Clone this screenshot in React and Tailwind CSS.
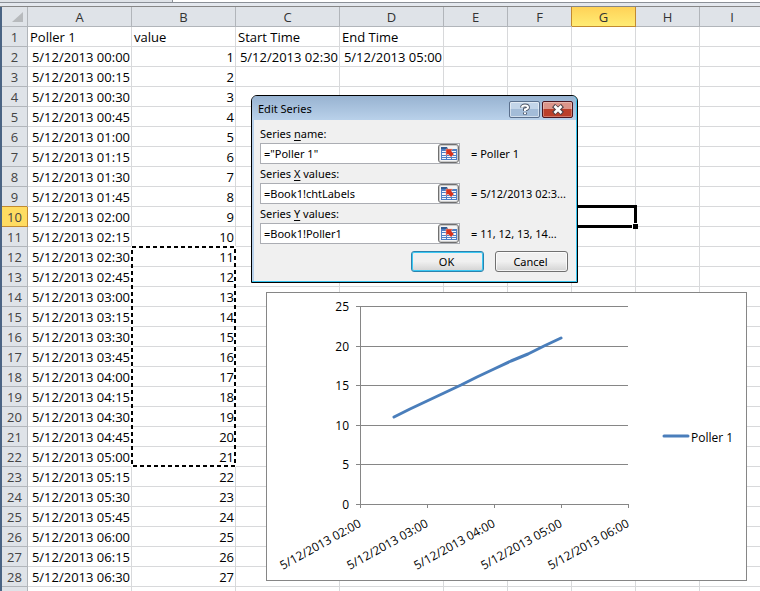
const columns = ["A", "B", "C", "D", "E", "F", "G", "H", "I"];
const activeCell = { column: "G", row: 10 };

const pad = (n) => String(n).padStart(2, "0");

// One poll every 15 minutes, starting at midnight
const polls = Array.from({ length: 27 }, (_, i) => ({
  time: `5/12/2013 ${pad(Math.floor(i / 4))}:${pad((i % 4) * 15)}`,
  value: i + 1,
}));

const rows = [
  { A: "Poller 1", B: "value", C: "Start Time", D: "End Time" },
  ...polls.map((p) => ({ A: p.time, B: p.value })),
];
rows[1].C = "5/12/2013 02:30";
rows[1].D = "5/12/2013 05:00";

function ActiveOutline() {
  return (
    <span className="absolute -top-0.5 -right-0.5 -bottom-0.5 -left-0.5 z-10 border-[3px] border-black">
      <span className="absolute -right-1 -bottom-1 size-[6px] border-t border-l border-white bg-black" />
    </span>
  );
}

function MarchingAnts() {
  return (
    <svg
      className="absolute -top-0.5 -left-0.5 z-10 h-[223px] w-[107px]"
      viewBox="0 0 107 223"
      fill="none"
    >
      <rect x="2" y="2" width="103" height="219" stroke="#fff" strokeWidth="2" />
      <rect x="2" y="2" width="103" height="219" stroke="#000" strokeWidth="2" strokeDasharray="4 3" />
    </svg>
  );
}

function Sheet() {
  return (
    <table className="w-full table-fixed border-separate border-spacing-0 text-[13px] leading-[17px] text-black">
      <colgroup>
        <col className="w-[26px]" />
        <col className="w-[104px]" />
        <col className="w-[104px]" />
        <col className="w-[104px]" />
        <col className="w-[104px]" />
        <col className="w-[64px]" />
        <col className="w-[64px]" />
        <col className="w-[64px]" />
        <col className="w-[64px]" />
        <col />
      </colgroup>
      <thead>
        <tr className="h-5">
          <th className="border-r border-b border-[#b1b5ba] bg-[#dfe3e8] p-0">
            <svg className="ml-2.5 size-3" viewBox="0 0 12 12">
              <path d="M11 1v10H0z" fill="#b7babd" />
            </svg>
          </th>
          {columns.map((c) => (
            <th
              key={c}
              scope="col"
              className={
                c === activeCell.column
                  ? "relative border-r border-b border-[#c28a30] bg-linear-to-b from-[#ffd257] to-[#ffec74] px-0 pt-0.5 pb-0 font-normal text-[#333] before:absolute before:inset-y-0 before:-left-px before:w-px before:bg-[#c28a30]"
                  : "border-r border-b border-[#b1b5ba] bg-[#dfe3e8] px-0 pt-0.5 pb-0 font-normal text-[#333] last:border-r-0 last:pl-1"
              }
            >
              {c}
            </th>
          ))}
        </tr>
      </thead>
      <tbody>
        {rows.map((row, i) => (
          <tr key={i} className="h-5">
            <th
              scope="row"
              className={
                i + 1 === activeCell.row
                  ? "relative border-r border-b border-[#c28a30] bg-[#ffdc61] px-0 pt-0.5 pb-0 font-normal text-[#444] before:absolute before:inset-x-0 before:-top-px before:h-px before:bg-[#c28a30]"
                  : "border-r border-b border-[#b1b5ba] bg-[#dfe3e8] px-0 pt-0.5 pb-0 font-normal text-[#444]"
              }
            >
              {i + 1}
            </th>
            {columns.map((c) => (
              <td
                key={c}
                className={
                  i === 0
                    ? "border-r border-b border-[#d8d9db] px-0.5 pt-0.5 pb-0 whitespace-nowrap last:border-r-0"
                    : "relative border-r border-b border-[#d8d9db] pt-0.5 pr-px pb-0 pl-0 text-right whitespace-nowrap last:border-r-0"
                }
              >
                {row[c]}
                {c === activeCell.column && i + 1 === activeCell.row && <ActiveOutline />}
                {c === "B" && i + 1 === 12 && <MarchingAnts />}
              </td>
            ))}
          </tr>
        ))}
        {/* Sliver of the next, still empty row */}
        <tr className="h-5">
          <th className="border-r border-[#b1b5ba] bg-[#dfe3e8] p-0" />
          {columns.map((c) => (
            <td key={c} className="border-r border-[#d8d9db] p-0 last:border-r-0" />
          ))}
        </tr>
      </tbody>
    </table>
  );
}

const plot = { left: 93, right: 361, top: 13, bottom: 211 };
const xTicks = ["02:00", "03:00", "04:00", "05:00", "06:00"];
const yTicks = [0, 5, 10, 15, 20, 25];
const yAt = (v) => Math.round(plot.bottom - (v * (plot.bottom - plot.top)) / 25);
const xAt = (quarters) => Math.round(plot.left + (quarters * (plot.right - plot.left)) / 16);

function Chart() {
  const points = polls
    .slice(10, 21)
    .map((p, i) => `${xAt(i + 2)},${yAt(p.value)}`)
    .join(" ");

  return (
    <div className="absolute top-[292px] left-[266px] z-20 border border-[#868686] bg-white">
      <svg className="block h-[287px] w-[479px]" viewBox="0 0 479 287" fontSize="12">
        <g stroke="#868686" shapeRendering="crispEdges">
          {yTicks.map((v) => (
            <line key={v} x1={plot.left - 4} x2={plot.right} y1={yAt(v)} y2={yAt(v)} />
          ))}
          <line x1={plot.left} x2={plot.left} y1={plot.top} y2={plot.bottom} />
          {xTicks.map((t, i) => (
            <line key={t} x1={xAt(i * 4)} x2={xAt(i * 4)} y1={plot.bottom} y2={plot.bottom + 4} />
          ))}
        </g>
        <polyline
          points={points}
          fill="none"
          stroke="#4a7ebb"
          strokeWidth="3"
          strokeLinecap="round"
          strokeLinejoin="round"
        />
        {yTicks.map((v) => (
          <text key={v} x="82" y={yAt(v) + 5} textAnchor="end">
            {v}
          </text>
        ))}
        {xTicks.map((t, i) => (
          <text
            key={t}
            textAnchor="end"
            transform={`translate(${xAt(i * 4) + 2} 233) rotate(-29)`}
          >
            5/12/2013 {t}
          </text>
        ))}
        <line x1="397" x2="421" y1="143" y2="143" stroke="#4a7ebb" strokeWidth="3" strokeLinecap="round" />
        <text x="424" y="149">
          Poller 1
        </text>
      </svg>
    </div>
  );
}

function RangeIcon() {
  return (
    <svg className="h-[15px] w-4 shrink-0" viewBox="0 0 16 15">
      <path d="M0 3h16v11H0z" fill="#4d7fc4" />
      <path d="M0 1h6l1 2H0z" fill="#33598f" />
      <path
        d="M1 5h4v1H1zM6 5h4v1H6zM11 5h4v1h-4zM1 7h4v2H1zM6 7h4v2H6zM11 7h4v2h-4zM1 10h4v1H1zM6 10h4v1H6zM11 10h4v1h-4zM1 12h4v1H1zM6 12h4v1H6zM11 12h4v1h-4z"
        fill="#f4f8fd"
      />
      <path
        d="M5 3h6.500l-1.500 2 3 3-3 3-3-3-2 1.500z"
        fill="#d8321c"
        stroke="#f5b3a4"
        strokeWidth="0.500"
      />
    </svg>
  );
}

function SeriesField({ id, before, accessKey, after, value, preview }) {
  return (
    <div>
      <label htmlFor={id} className="block h-[19px] leading-[19px]">
        {before}
        <span className="underline underline-offset-2">{accessKey}</span>
        {after}
      </label>
      <div className="flex items-center">
        <div className="flex h-[21px] w-[200px] border border-[#abadb3] bg-white">
          <input id={id} defaultValue={value} className="min-w-0 flex-1 pt-px pl-[3px] outline-none" />
          <button
            type="button"
            aria-label="Select range"
            className="flex w-[21px] items-center justify-center rounded-[3px] border border-[#707070] bg-[#f4f4f4] inset-ring inset-ring-[#c9c9c9]"
          >
            <RangeIcon />
          </button>
        </div>
        <span className="ml-[11px] pt-px whitespace-nowrap">{preview}</span>
      </div>
    </div>
  );
}

function EditSeriesDialog() {
  return (
    <div
      role="dialog"
      aria-label="Edit Series"
      className="absolute top-[95px] left-[251px] z-30 w-[327px] rounded-t-md border border-black bg-[#b9d1ea] font-['Noto_Sans',sans-serif] text-[11px] text-black"
    >
      <div className="rounded-t-[5px] border-r border-b border-r-[#35c3ee] border-b-[#35c3ee]">
        <div className="flex h-6 items-center rounded-t-[5px] bg-linear-to-b from-[#98b3d1] to-[#b9d1ea] pt-0.5 pr-[3px] pl-1.5">
          <span className="flex-1 text-[11px]">Edit Series</span>
          <div className="flex gap-0.5">
            <button
              type="button"
              aria-label="Help"
              className="flex h-[17px] w-[31px] items-center justify-center rounded-xs border border-[#5a6f8c] bg-linear-to-b from-[#c3d5e9] from-50% to-[#a3bcd8] to-50% inset-ring inset-ring-white/50"
            >
              <svg className="h-[13px] w-3" viewBox="0 0 12 13" fill="none">
                <path d="M3 4.500Q3 2.500 6 2.500T9 4.500Q9 5.700 6 6.500V8M6 9.500v2" stroke="#4d5566" strokeWidth="3.800" />
                <path d="M3 4.500Q3 2.500 6 2.500T9 4.500Q9 5.700 6 6.500V8M6 9.500v1.500" stroke="#fff" strokeWidth="2" />
              </svg>
            </button>
            <button
              type="button"
              aria-label="Close"
              className="flex h-[17px] w-[31px] items-center justify-center rounded-xs border border-[#4b1620] bg-linear-to-b from-[#dc958a] from-45% to-[#bb3f2a] to-45% inset-ring inset-ring-white/30"
            >
              <svg className="h-[11px] w-3" viewBox="0 0 12 11" fill="none">
                <path d="M1.500 1.500l9 8M10.500 1.500l-9 8" stroke="#4f4148" strokeWidth="4.400" />
                <path d="M2.500 2l7 7M9.500 2l-7 7" stroke="#fff" strokeWidth="2.600" />
              </svg>
            </button>
          </div>
        </div>
        <div className="ml-0.5 bg-[#f0f0f0] pt-1 pr-2 pb-[9px] pl-1.5">
          <SeriesField
            id="series-name"
            before="Series "
            accessKey="n"
            after="ame:"
            value={'="Poller 1"'}
            preview="= Poller 1"
          />
          <SeriesField
            id="series-x"
            before="Series "
            accessKey="X"
            after=" values:"
            value="=Book1!chtLabels"
            preview="= 5/12/2013 02:3..."
          />
          <SeriesField
            id="series-y"
            before="Series "
            accessKey="Y"
            after=" values:"
            value="=Book1!Poller1"
            preview="= 11, 12, 13, 14..."
          />
          <div className="mt-[7px] flex justify-end gap-[11px]">
            <button
              type="button"
              className="h-[21px] w-[73px] rounded-[3px] border border-[#2b83ae] bg-linear-to-b from-[#f0f0f0] from-50% to-[#d3d3d3] pt-px pr-0.5 inset-ring inset-ring-[#3bc8f3]"
            >
              OK
            </button>
            <button
              type="button"
              className="h-[21px] w-[73px] rounded-[3px] border border-[#707070] bg-linear-to-b from-[#f0f0f0] from-50% to-[#d3d3d3] pt-px pr-0.5 inset-ring inset-ring-white/70"
            >
              Cancel
            </button>
          </div>
        </div>
      </div>
    </div>
  );
}

export default function App() {
  return (
    <div className="relative h-screen overflow-hidden bg-white font-['Open_Sans',sans-serif]">
      <div className="flex h-[3px] border-b border-[#8b9097] bg-white">
        <div className="w-[173px] border-r border-[#8b9097] bg-[#dfe3e8]" />
      </div>
      <div className="h-1 border-b border-[#868686] bg-[#e4e8ee]" />
      <div className="border-l-2 border-[#4a6484]">
        <Sheet />
      </div>
      <Chart />
      <EditSeriesDialog />
    </div>
  );
}
